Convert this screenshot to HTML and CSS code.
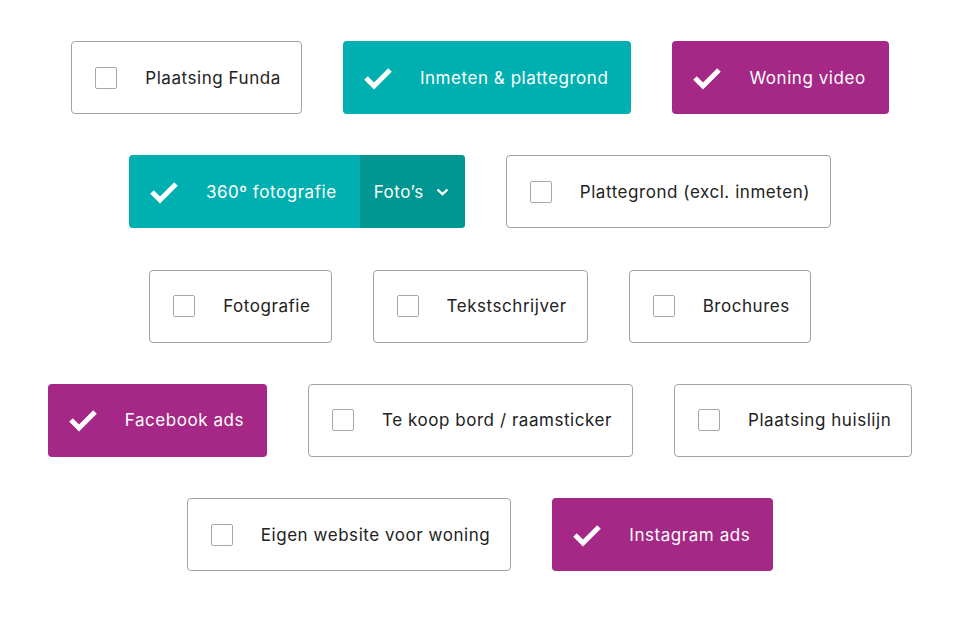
FILE: index.html
```html
<!DOCTYPE html>
<html lang="nl">
<head>
<meta charset="utf-8">
<title>Opties</title>
<link rel="stylesheet" href="styles.css">
</head>
<body>
<main class="board">
  <div class="row">
    <div class="chip"><span class="box"></span><span class="label">Plaatsing Funda</span></div>
    <div class="chip chip--teal"><svg class="check" viewBox="0 0 30 24"><polyline points="3,12 11,20 27,4"/></svg><span class="label">Inmeten &amp; plattegrond</span></div>
    <div class="chip chip--plum"><svg class="check" viewBox="0 0 30 24"><polyline points="3,12 11,20 27,4"/></svg><span class="label">Woning video</span></div>
  </div>
  <div class="row">
    <div class="chip chip--teal chip--split">
      <div class="main"><svg class="check" viewBox="0 0 30 24"><polyline points="3,12 11,20 27,4"/></svg><span class="label">360º fotografie</span></div>
      <div class="drop"><span class="label">Foto’s</span><svg class="chev" viewBox="0 0 13 8"><polyline points="1.5,1.5 6.5,6.2 11.5,1.5"/></svg></div>
    </div>
    <div class="chip"><span class="box"></span><span class="label">Plattegrond (excl. inmeten)</span></div>
  </div>
  <div class="row">
    <div class="chip"><span class="box"></span><span class="label">Fotografie</span></div>
    <div class="chip"><span class="box"></span><span class="label">Tekstschrijver</span></div>
    <div class="chip"><span class="box"></span><span class="label">Brochures</span></div>
  </div>
  <div class="row">
    <div class="chip chip--plum"><svg class="check" viewBox="0 0 30 24"><polyline points="3,12 11,20 27,4"/></svg><span class="label">Facebook ads</span></div>
    <div class="chip"><span class="box"></span><span class="label">Te koop bord / raamsticker</span></div>
    <div class="chip"><span class="box"></span><span class="label">Plaatsing huislijn</span></div>
  </div>
  <div class="row">
    <div class="chip"><span class="box"></span><span class="label">Eigen website voor woning</span></div>
    <div class="chip chip--plum"><svg class="check" viewBox="0 0 30 24"><polyline points="3,12 11,20 27,4"/></svg><span class="label">Instagram ads</span></div>
  </div>
</main>
</body>
</html>
```
FILE: styles.css
```css
html, body {
  margin: 0;
  padding: 0;
  background: #ffffff;
}
body {
  font-family: Inter, "Noto Sans", "Liberation Sans", sans-serif;
  color: #222222;
}
.board {
  display: flex;
  flex-direction: column;
  gap: 41.3px;
  padding-top: 41px;
}
.row {
  display: flex;
  justify-content: center;
  gap: 41px;
}
.chip {
  box-sizing: border-box;
  height: 73px;
  display: flex;
  align-items: center;
  gap: 28px;
  padding: 0 20px 0 23px;
  border: 1px solid #a3a3a3;
  border-radius: 4px;
  background: #fff;
}
.label {
  font-size: 17px;
  letter-spacing: 0.55px;
  white-space: nowrap;
}
.box {
  box-sizing: border-box;
  width: 22px;
  height: 22px;
  border: 1px solid #a8a8a8;
  border-radius: 2px;
  flex: none;
}
.chip--teal, .chip--plum {
  border: none;
  color: #fff;
  gap: 27px;
  padding: 0 23px 0 20px;
}
.chip--teal { background: #00afaf; }
.chip--plum { background: #a52886; }
.check {
  width: 30px;
  height: 24px;
  flex: none;
}
.check polyline {
  fill: none;
  stroke: #fff;
  stroke-width: 5;
}
.chip--split {
  padding: 0;
  gap: 0;
  overflow: hidden;
  align-items: stretch;
}
.chip--split .main {
  display: flex;
  align-items: center;
  gap: 27px;
  padding: 0 23px 0 20px;
}
.chip--split .drop {
  display: flex;
  align-items: center;
  gap: 12px;
  padding: 0 16px 0 14px;
  background: #009792;
}
.chev {
  width: 13px;
  height: 8px;
  flex: none;
}
.chev polyline {
  fill: none;
  stroke: #fff;
  stroke-width: 2.4;
}
```
